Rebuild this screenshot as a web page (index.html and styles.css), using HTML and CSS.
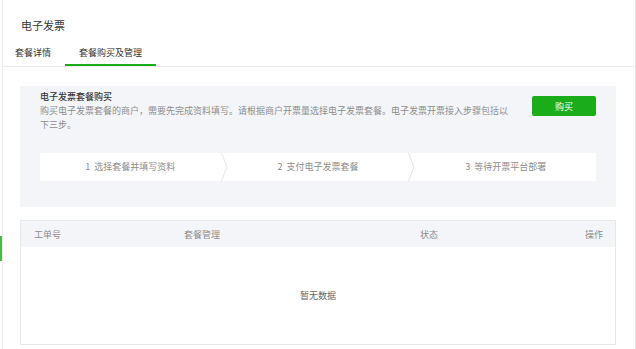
FILE: index.html
```html
<!DOCTYPE html>
<html lang="zh-CN">
  <head>
    <meta charset="utf-8" />
    <meta name="viewport" content="width=device-width, initial-scale=1" />
    <title>电子发票</title>
    <link rel="stylesheet" href="styles.css">
  </head>
  <body>
    <div class="side">
      <div class="side-active"></div>
    </div>

    <div class="main">
      <h1 class="title">电子发票</h1>

      <div class="tabs">
        <div class="tab">套餐详情</div>
        <div class="tab active">套餐购买及管理</div>
      </div>

      <div class="buy-box">
        <div class="buy-top">
          <div class="buy-text">
            <h2>电子发票套餐购买</h2>
            <p>购买电子发票套餐的商户，需要先完成资料填写。请根据商户开票量选择电子发票套餐。电子发票开票接入步骤包括以下三步。</p>
          </div>
          <button class="btn-buy">购买</button>
        </div>

        <div class="steps">
          <div class="step">1&nbsp; 选择套餐并填写资料</div>
          <svg class="arrow" width="7" height="28" viewBox="0 0 7 28">
            <polyline points="0.5,0 6,14 0.5,28" fill="none" stroke="#e3e4e8" stroke-width="1" />
          </svg>
          <div class="step">2&nbsp; 支付电子发票套餐</div>
          <svg class="arrow" width="7" height="28" viewBox="0 0 7 28">
            <polyline points="0.5,0 6,14 0.5,28" fill="none" stroke="#e3e4e8" stroke-width="1" />
          </svg>
          <div class="step">3&nbsp; 等待开票平台部署</div>
        </div>
      </div>

      <div class="table">
        <div class="table-head">
          <div class="col col-id">工单号</div>
          <div class="col col-pkg">套餐管理</div>
          <div class="col col-status">状态</div>
          <div class="col col-op">操作</div>
        </div>
        <div class="table-empty">暂无数据</div>
      </div>
    </div>
  </body>
</html>
```

FILE: styles.css
```css
* {
  box-sizing: border-box;
}
body {
  margin: 0;
  width: 636px;
  height: 349px;
  display: flex;
  overflow: hidden;
  background: #fff;
  font-family: "Noto Sans CJK SC", "Noto Sans", sans-serif;
  color: #333;
}
.side {
  width: 3px;
  border-right: 1px solid #ececec;
}
.side-active {
  width: 2px;
  height: 25px;
  margin-top: 236px;
  background: #4cb84c;
}
.main {
  flex: 1;
  border-right: 1px solid #e4e4e4;
}
.title {
  margin: 0;
  height: 40px;
  padding: 17px 0 0 18px;
  font-size: 11px;
  font-weight: normal;
  line-height: 16px;
  color: #353535;
}
.tabs {
  display: flex;
  height: 27px;
  border-bottom: 1px solid #eaeaea;
}
.tab {
  padding: 6px 14px 0;
  font-size: 9px;
  line-height: 14px;
  color: #353535;
}
.tab:first-child {
  padding-left: 12px;
  padding-right: 14px;
}
.tab.active {
  border-bottom: 2px solid #1aad19;
  height: 26px;
}
.buy-box {
  margin: 19px 19px 0 17px;
  padding: 4px 20px 26px;
  background: #f4f5f9;
}
.buy-top {
  display: flex;
  justify-content: space-between;
  align-items: flex-start;
}
.buy-text {
  width: 474px;
}
.buy-text h2 {
  margin: 0;
  font-size: 9px;
  line-height: 14px;
  font-weight: 500;
  color: #353535;
}
.buy-text p {
  margin: 0;
  font-size: 9px;
  line-height: 14px;
  color: #8d8d8d;
}
.btn-buy {
  margin-top: 6px;
  width: 64px;
  height: 20px;
  padding: 0;
  border: none;
  border-radius: 2px;
  background: #1aad19;
  color: #fff;
  font-family: inherit;
  font-size: 9px;
}
.steps {
  margin-top: 21px;
  height: 28px;
  display: flex;
  background: #fff;
}
.step {
  flex: 1;
  text-align: center;
  font-size: 9px;
  line-height: 28px;
  color: #8d8d8d;
}
.arrow {
  flex: none;
  display: block;
}
.table {
  margin: 13px 19px 0 17px;
  border: 1px solid #e4e7ec;
  height: 125px;
}
.table-head {
  display: flex;
  height: 26px;
  align-items: center;
  background: #f4f5f9;
  font-size: 9px;
  color: #8d8d8d;
}
.col-id {
  width: 163px;
  padding-left: 13px;
}
.col-pkg {
  width: 236px;
}
.col-status {
  width: 160px;
}
.col-op {
  flex: 1;
  text-align: right;
  padding-right: 12px;
}
.table-empty {
  height: 97px;
  display: flex;
  align-items: center;
  justify-content: center;
  font-size: 9px;
  color: #666;
}
```
